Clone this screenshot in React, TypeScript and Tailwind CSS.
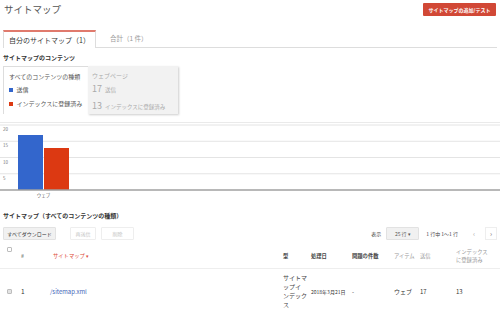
import React from "react";

const gridCols =
  "grid grid-cols-[14px_29px_233px_28px_41px_42px_26px_36px_1fr] pl-[7px]";

function Checkbox({ filled }: { filled?: boolean }) {
  return (
    <span
      className={
        "block w-[5px] h-[5px] border border-[#bdbdbd] rounded-[1px] " +
        (filled ? "bg-[#e3e3e3]" : "bg-white")
      }
    />
  );
}

function Chart() {
  const grid = [2, 18.25, 34.5, 50.75];
  const labels = ["20", "15", "10", "5"];
  return (
    <svg width="500" height="78" className="block">
      {grid.map((y, i) => (
        <g key={i}>
          <line x1="0" x2="500" y1={y} y2={y} stroke="#e4e4e4" strokeWidth="1" />
          <text x="3" y={y + 6} fontSize="4.5" fill="#777">
            {labels[i]}
          </text>
        </g>
      ))}
      <rect x="18" y="12" width="25" height="55" fill="#3366cc" />
      <rect x="44" y="25" width="25" height="42" fill="#dc3912" />
      <line x1="0" x2="500" y1="67" y2="67" stroke="#a0a0a0" strokeWidth="1.5" />
      <text x="43.5" y="74" fontSize="4.5" fill="#555" textAnchor="middle">
        ウェブ
      </text>
    </svg>
  );
}

export default function App() {
  return (
    <div className="w-[500px] h-[309px] overflow-hidden bg-white text-[#444] font-['Noto_Sans_CJK_JP',sans-serif]">
      {/* Header */}
      <div className="flex justify-between items-start h-[20px] px-[4px] pt-[3px]">
        <h1 className="text-[9.5px] leading-[13px] text-[#555]">サイトマップ</h1>
        <button className="h-[13px] w-[73px] bg-[#d14836] text-white text-[5px] font-bold rounded-[1px] leading-none">
          サイトマップの追加/テスト
        </button>
      </div>

      {/* Tabs */}
      <div className="flex items-end mt-[11px] mx-[3px] h-[17px] border-b border-[#ddd]">
        <div className="w-[93px] h-[18px] -mb-px bg-white border-t-2 border-t-[#e07a6d] border-x border-x-[#ddd] flex items-center justify-center text-[7px] text-[#333]">
          自分のサイトマップ（1）
        </div>
        <div className="h-[17px] pl-[14px] flex items-center text-[6.5px] text-[#999]">
          合計（1 件）
        </div>
      </div>

      {/* Content summary */}
      <div className="mt-[6px] px-[3px] text-[6px] leading-[8px] font-bold text-[#333]">
        サイトマップのコンテンツ
      </div>
      <div className="flex mt-[4px] mx-[3px] h-[48px]">
        <div className="w-[85px] border-l border-t border-[#ddd] pl-[5px] pt-[6px] text-[6px] leading-[8px] text-[#555]">
          <div>すべてのコンテンツの種類</div>
          <div className="flex items-center gap-[4px] mt-[5px]">
            <span className="w-[3.5px] h-[3.5px] bg-[#3366cc]" />
            送信
          </div>
          <div className="flex items-center gap-[4px] mt-[6px]">
            <span className="w-[3.5px] h-[3.5px] bg-[#dc3912]" />
            インデックスに登録済み
          </div>
        </div>
        <div className="w-[90px] bg-[#f2f2f2] shadow-[1px_1px_2px_rgba(0,0,0,0.2)] pl-[4px] pt-[6px] text-[#aaa]">
          <div className="text-[6px] leading-[8px]">ウェブページ</div>
          <div className="flex items-baseline gap-[3px] mt-[3px] leading-[11px]">
            <span className="text-[9px]">17</span>
            <span className="text-[5.5px]">送信</span>
          </div>
          <div className="flex items-baseline gap-[3px] mt-[4px] leading-[11px]">
            <span className="text-[9px]">13</span>
            <span className="text-[5.5px]">インデックスに登録済み</span>
          </div>
        </div>
      </div>

      {/* Chart */}
      <div className="mt-[8px] border-t border-[#eaeaea]">
        <Chart />
      </div>

      {/* Sitemap list */}
      <div className="mt-[11px] px-[3px] text-[6px] leading-[8px] font-bold text-[#333]">
        サイトマップ（すべてのコンテンツの種類）
      </div>
      <div className="flex justify-between items-center mt-[7px] h-[13px] px-[3px]">
        <div className="flex h-full">
          <button className="w-[53px] h-full bg-[#f1f1f1] border border-[#e2e2e2] rounded-[1px] text-[5px] text-[#333]">
            すべてダウンロード
          </button>
          <button className="ml-[14px] w-[26px] h-full border border-[#eee] rounded-[1px] text-[5px] text-[#c4c4c4]">
            再送信
          </button>
          <button className="ml-[5px] w-[33px] h-full border border-[#eee] rounded-[1px] text-[5px] text-[#c4c4c4]">
            削除
          </button>
        </div>
        <div className="flex items-center h-full text-[5px] text-[#444]">
          <span>表示</span>
          <button className="ml-[5px] w-[33px] h-full bg-[#f1f1f1] border border-[#e2e2e2] rounded-[1px] text-[5px] text-[#555]">
            25 行 ▾
          </button>
          <span className="ml-[7px]">1 行中 1〜1 行</span>
          <button className="ml-[10px] w-[12px] h-full text-[7px] text-[#aaa]">‹</button>
          <button className="ml-[5px] w-[12px] h-full border border-[#eee] text-[7px] text-[#777]">
            ›
          </button>
        </div>
      </div>

      {/* Table header */}
      <div className={gridCols + " mt-[4px] h-[25px] items-center border-b border-[#eee] text-[5.3px] leading-[8px]"}>
        <div className="self-start mt-[3px]">
          <Checkbox />
        </div>
        <div className="text-[#555]">#</div>
        <div className="pl-[3px] text-[#dd4b39]">サイトマップ ▾</div>
        <div className="font-bold text-[#444]">型</div>
        <div className="font-bold text-[#444]">処理日</div>
        <div className="font-bold text-[#444]">問題の件数</div>
        <div className="text-[#999]">アイテム</div>
        <div className="text-[#999]">送信</div>
        <div className="text-[#999]">
          インデックス
          <br />
          に登録済み
        </div>
      </div>

      {/* Table row */}
      <div className={gridCols + " pt-[4px] items-center text-[6px] leading-[9px] text-[#333]"}>
        <div>
          <Checkbox filled />
        </div>
        <div className="text-[6.5px] text-[#333]">1</div>
        <div className="text-[#3d63b8]">/sitemap.xml</div>
        <div className="text-[#444]">
          サイトマ
          <br />
          ップイ
          <br />
          ンデック
          <br />
          ス
        </div>
        <div className="text-[5px] whitespace-nowrap">2018年3月21日</div>
        <div>-</div>
        <div>ウェブ</div>
        <div className="text-[#333]">17</div>
        <div className="text-[#333]">13</div>
      </div>
    </div>
  );
}
